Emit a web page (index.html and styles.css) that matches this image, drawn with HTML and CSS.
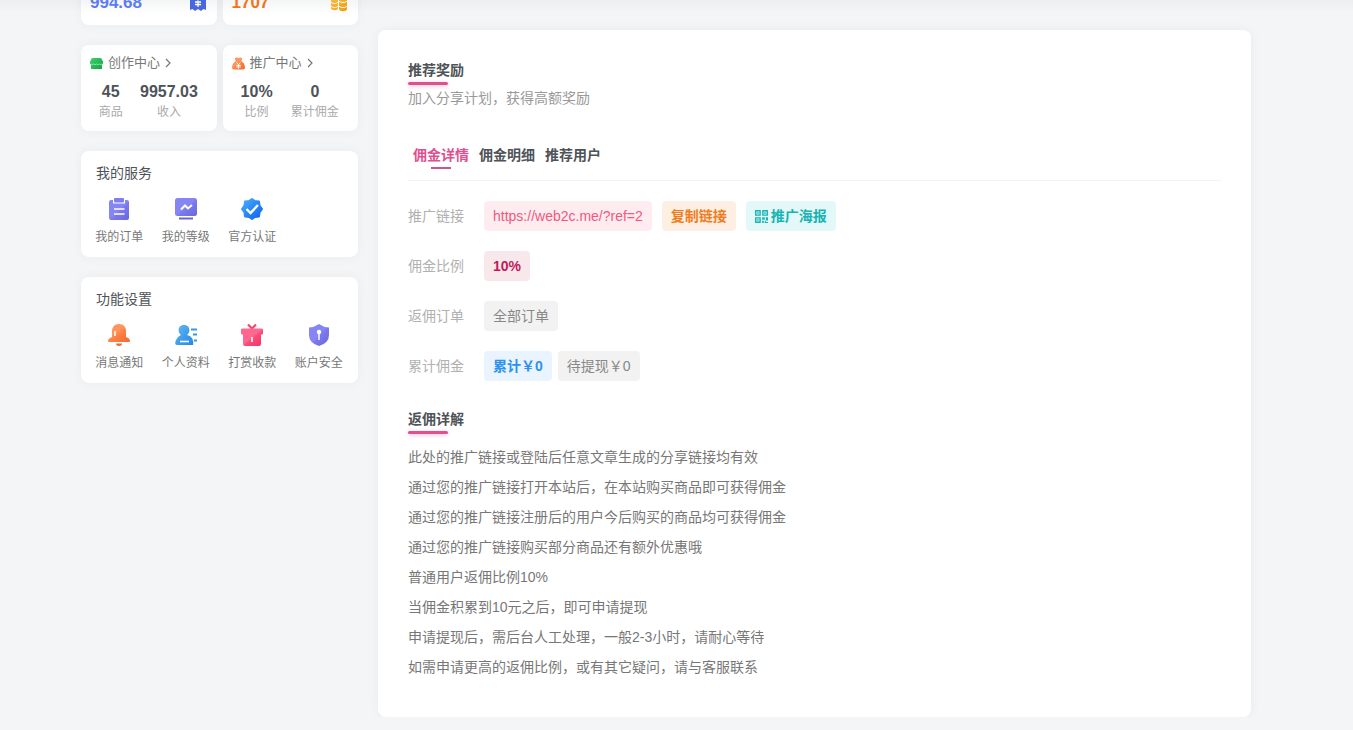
FILE: index.html
```html
<!DOCTYPE html>
<html lang="zh-CN">
<head>
<meta charset="utf-8">
<meta name="viewport" content="width=device-width, initial-scale=1">
<title>推荐奖励</title>
<link rel="stylesheet" href="styles.css">
</head>
<body>
<svg class="defs" aria-hidden="true">
  <defs>
    <linearGradient id="purple" x2="1" y2="1"><stop offset=".5" stop-color="#8585f4"/><stop offset=".55" stop-color="#7a7aee"/><stop offset="1" stop-color="#6866dd"/></linearGradient>
    <linearGradient id="blue" x2="1" y2="1"><stop stop-color="#4aaeff"/><stop offset="1" stop-color="#0b62ec"/></linearGradient>
    <linearGradient id="sky" x2="1" y2="1"><stop stop-color="#62b8f8"/><stop offset="1" stop-color="#2389df"/></linearGradient>
    <linearGradient id="orange" x2="1" y2="1"><stop offset=".4" stop-color="#ff955a"/><stop offset=".55" stop-color="#fd8045"/><stop offset="1" stop-color="#f4682c"/></linearGradient>
    <linearGradient id="pink" x2="1" y2="1"><stop offset=".5" stop-color="#ff6690"/><stop offset=".55" stop-color="#fb4d7b"/><stop offset="1" stop-color="#f2305f"/></linearGradient>
    <linearGradient id="green" x2="1" y2="1"><stop stop-color="#3fcf6c"/><stop offset="1" stop-color="#12a544"/></linearGradient>
    <linearGradient id="gold" x2="1" y2="1"><stop stop-color="#fbc34b"/><stop offset="1" stop-color="#f09a12"/></linearGradient>
  </defs>
</svg>
<div class="container">
  <aside class="sidebar">
    <div class="pair pair-top">
      <a class="card wallet wallet-blue" href="#"><span>994.68</span>
        <svg class="wallet-icon" viewBox="0 0 18 18"><path fill="#4a68dd" d="M1 0h16v16l-2.500-1-2.500 2-3-2-3 2-2.500-2L1 16z"/><path stroke="#fff" stroke-width="1.300" fill="none" d="M6 2l3 4 3-4M9 6v7M6 8h6M6 10.500h6"/></svg></a>
      <a class="card wallet wallet-orange" href="#"><span>1707</span>
        <svg class="wallet-icon" viewBox="0 0 18 18"><g fill="url(#gold)"><path d="M1 5c0-3 7-3 7 0v9c0 3-7 3-7 0zM9 2c0-3 8-3 8 0v13c0 3-8 3-8 0z"/></g><path fill="none" stroke="#fff" stroke-width="1" d="M1 8c1 2 6 2 7 0M1 12c1 2 6 2 7 0M9 7c1 2 7 2 8 0M9 12c1 2 7 2 8 0M8.500 2v14"/></svg></a>
    </div>
    <div class="pair">
      <section class="card mini">
        <a class="mini-head" href="#">
          <svg class="mini-icon" viewBox="0 0 14 14"><path fill="url(#green)" d="M3 1h8q1 0 1.500 1L14 5v2l-1 1v4q0 1-1 1H2q-1 0-1-1V8L0 7V5l1.500-3Q2 1 3 1z"/><path d="M1 7.500q1.500 1.500 3 0 1.500 1.500 3 0 1.500 1.500 3 0 1.500 1.500 3 0" stroke="#b9f2c9" stroke-width=".8" fill="none"/></svg>
          <span>创作中心</span><svg class="arrow" viewBox="0 0 6 10"><path d="M1 1l4 4-4 4"/></svg></a>
        <div class="stats"><div><b>45</b><small>商品</small></div><div><b>9957.03</b><small>收入</small></div></div>
      </section>
      <section class="card mini">
        <a class="mini-head" href="#">
          <svg class="mini-icon" viewBox="0 0 14 14"><path fill="url(#orange)" d="M3 1q2-1 4 0 2-1 4 0L10 4.500Q13.500 6 14 11q0 2.500-2 2.500H2Q0 13.500 0 11 .5 6 4 4.500z"/><path stroke="#fff" fill="none" d="M5 6l2 2.300L9 6M7 8v4.500M4.500 9h5M4.500 10.800h5"/></svg>
          <span>推广中心</span><svg class="arrow" viewBox="0 0 6 10"><path d="M1 1l4 4-4 4"/></svg></a>
        <div class="stats"><div><b>10%</b><small>比例</small></div><div><b>0</b><small>累计佣金</small></div></div>
      </section>
    </div>
    <section class="card panel">
      <h2>我的服务</h2>
      <nav class="links">
        <a href="#"><svg viewBox="0 0 22 22"><path fill="url(#purple)" d="M3 2h2v3.500h12V2h2q2 0 2 2v16q0 2-2 2H3q-2 0-2-2V4q0-2 2-2z"/><rect x="6" width="10" height="4.500" rx="1" fill="#7d7ef0"/><path stroke="#fff" stroke-width="1.600" d="M6 11h10.500M6 16h10.500"/></svg>我的订单</a>
        <a href="#"><svg viewBox="0 0 22 22"><rect width="22" height="18" rx="2.500" fill="url(#purple)"/><path d="M4 19.500h14v2H4z" fill="#6564dc"/><path d="M6 11.500l4-4 3 3 4-3.500" stroke="#fff" stroke-width="2" fill="none"/></svg>我的等级</a>
        <a href="#"><svg viewBox="0 0 22 22"><path fill="url(#blue)" stroke="url(#blue)" stroke-width="2" stroke-linejoin="round" d="M11 1l3 2 4 .5 .5 4L21 11l-2.500 3.500-.5 4-4 .5-3 2-3-2-4-.5-.5-4L1 11l2.500-3.500 .5-4L8 3z"/><path d="M5.500 11l4 4L17 7" stroke="#fff" stroke-width="2.400" fill="none"/></svg>官方认证</a>
      </nav>
    </section>
    <section class="card panel">
      <h2>功能设置</h2>
      <nav class="links">
        <a href="#"><svg viewBox="0 0 22 22"><path fill="url(#orange)" d="M4 8q0-8 7-8t7 8v5q4 1.500 4 4 0 1-1 1H1q-1 0-1-1 0-2.500 4-4z"/><path d="M7 7v5" stroke="#fff" stroke-width="1.500"/><path d="M8 19.500h6q0 2.500-3 2.500t-3-2.500z" fill="#f06b31"/></svg>消息通知</a>
        <a href="#"><svg viewBox="0 0 22 22"><path fill="url(#sky)" d="M9 1c6 0 7 7 3 10 5 1 7 5 6 10H2q-3 0-1-5 2-4 5-5C2 8 3 1 9 1z"/><path d="M16 5.500h6M18 10.500h4M19 16.500h3" stroke="#3997e8" stroke-width="1.800"/><path d="M5 17.500h9" stroke="#fff" stroke-width="1.600"/></svg>个人资料</a>
        <a href="#"><svg viewBox="0 0 22 22"><path d="M7 .5l4 4 4-4" stroke="#ef4770" stroke-width="2.200" fill="none"/><path fill="url(#pink)" d="M1.500 4.500h19q1.500 0 1.500 1v4q0 1-1 1h-1V20q0 2-2 2H4q-2 0-2-2v-9.500H1q-1 0-1-1v-4q0-1 1.500-1z"/><path d="M11 13v5" stroke="#fff" stroke-width="1.600"/></svg>打赏收款</a>
        <a href="#"><svg viewBox="0 0 22 22"><path fill="url(#purple)" d="M11 0q5 3.500 10 3.500V11q0 8-10 11Q1 19 1 11V3.500Q6 3.500 11 0z"/><circle cx="11" cy="8" r="2.200" fill="#fff"/><path d="M11 9v7" stroke="#fff" stroke-width="1.500"/></svg>账户安全</a>
      </nav>
    </section>
  </aside>
  <div class="content">
    <div class="card previous"></div>
    <main class="card main">
      <h1 class="title">推荐奖励</h1>
      <p class="subtitle">加入分享计划，获得高额奖励</p>
      <div class="tabs">
        <button type="button" class="tab active">佣金详情</button>
        <button type="button" class="tab">佣金明细</button>
        <button type="button" class="tab">推荐用户</button>
      </div>
      <div class="rows">
        <div class="row"><span class="label">推广链接</span><div class="chips wide"><a class="chip red" href="#">https://web2c.me/?ref=2</a><button type="button" class="chip orange">复制链接</button><button type="button" class="chip teal"><svg class="qr" viewBox="0 0 12 12"><path d="M.7.700h4v4h-4zM7.300.700h4v4h-4zM.7 7.300h4v4h-4z" fill="none" stroke="currentColor" stroke-width="1.300"/><path fill="currentColor" d="M2 2h1.400v1.400H2zM8.600 2H10v1.400H8.600zM2 8.600h1.400V10H2zM6.600 6.600H9V9H6.600zM10 6.600h2v3h-2zM6.600 10h1.500v2H6.600zM9 10h1v1h2v1H9z"/></svg>推广海报</button></div></div>
        <div class="row"><span class="label">佣金比例</span><div class="chips"><span class="chip rose">10%</span></div></div>
        <div class="row"><span class="label">返佣订单</span><div class="chips"><span class="chip gray">全部订单</span></div></div>
        <div class="row"><span class="label">累计佣金</span><div class="chips"><span class="chip blue">累计￥0</span><span class="chip gray">待提现￥0</span></div></div>
      </div>
      <h2 class="title">返佣详解</h2>
      <div class="details">
        <p>此处的推广链接或登陆后任意文章生成的分享链接均有效</p>
        <p>通过您的推广链接打开本站后，在本站购买商品即可获得佣金</p>
        <p>通过您的推广链接注册后的用户今后购买的商品均可获得佣金</p>
        <p>通过您的推广链接购买部分商品还有额外优惠哦</p>
        <p>普通用户返佣比例10%</p>
        <p>当佣金积累到10元之后，即可申请提现</p>
        <p>申请提现后，需后台人工处理，一般2-3小时，请耐心等待</p>
        <p>如需申请更高的返佣比例，或有其它疑问，请与客服联系</p>
      </div>
    </main>
  </div>
</div>
</body>
</html>
```
FILE: styles.css
```css
* { box-sizing: border-box; }
body {
  margin: 0;
  padding-right: 21px;
  overflow: hidden;
  background: #f4f5f7 linear-gradient(#eceef0, #f4f5f7) 0 0 / 100% 12px no-repeat;
  color: #4e5358;
  font: 14px/20px "Liberation Sans", "Noto Sans CJK SC", sans-serif;
}
h1, h2, p { margin: 0; font-size: 14px; }
a { color: inherit; text-decoration: none; }
button { border: 0; background: none; font: inherit; color: inherit; cursor: pointer; }
.defs { position: absolute; width: 0; height: 0; }

.container {
  display: grid;
  grid-template-columns: 277px 1fr;
  gap: 20px;
  align-items: start;
  max-width: 1170px;
  margin: 0 auto;
}
.card { background: #fff; border-radius: 8px; box-shadow: 0 0 10px rgba(116, 116, 116, .08); }
.sidebar { display: grid; gap: 20px; }
.pair { display: grid; grid-template-columns: 1fr 1fr; gap: 6px; }
.pair-top { margin-top: -40px; }

.wallet {
  display: flex;
  justify-content: space-between;
  align-items: center;
  padding: 33px 10px 12px 9px;
  font-size: 17px;
  font-weight: bold;
  background: linear-gradient(#f4f5f6 40px, #fff 54px);
}
.wallet-blue { color: #5c7cf2; }
.wallet-orange { color: #f0751c; }
.wallet-icon { width: 18px; height: 18px; }

.mini { padding: 8px 10px 8px 9px; }
.mini-head { display: flex; align-items: center; font-size: 13px; color: #777; }
.mini-icon { width: 13px; height: 13px; margin-right: 5px; }
.arrow { width: 6px; height: 10px; margin-left: 5px; fill: none; stroke: #777; stroke-width: 1.200; }
.stats { display: flex; justify-content: space-around; margin-top: 8px; text-align: center; }
.stats b { display: block; font-size: 16px; line-height: 21px; }
.stats small { display: block; font-size: 12px; line-height: 21px; color: #aaa; }

.panel { padding: 12px 6px 10px 5px; }
.panel h2 { padding-left: 10px; font-weight: normal; }
.links { display: grid; grid-template-columns: repeat(4, 1fr); margin-top: 15px; }
.links a { display: grid; justify-items: center; gap: 7px; font-size: 12px; color: #777; }
.links svg { width: 22px; height: 22px; }

.content { display: grid; gap: 30px; }
.previous { height: 0; }
.main { padding: 30px 30px 35px; }
.title { width: max-content; font-weight: bold; }
.title::after { content: ""; display: block; width: 40px; height: 3px; margin-top: 2px; border-radius: 2px; background: #e0508f; box-shadow: 0 1px 4px rgba(224, 80, 143, .4); }
.subtitle { margin-top: 3px; color: #999; }

.tabs { display: flex; margin-top: 37px; padding-bottom: 11px; border-bottom: 1px solid #f2f2f3; }
.tab { padding: 0 5px; font-weight: bold; }
.tab::after { content: ""; display: block; width: 20px; height: 2px; margin: 2px auto 0; }
.tab.active { color: #e0508f; }
.tab.active::after { background: #cf5589; }

.rows { display: grid; gap: 20px; margin: 20px 0 28px; }
.row { display: flex; align-items: center; gap: 20px; }
.label { color: #b1b1b1; }
.chips { display: flex; flex-wrap: wrap; gap: 6px; }
.chips.wide { gap: 10px; }
.chip { display: flex; align-items: center; gap: 3px; padding: 5px 9px; border-radius: 4px; }
.qr { width: 13px; height: 13px; }
.red { color: #f0597c; background: #feecf1; }
.orange { color: #f17c1f; background: #feefe3; font-weight: bold; }
.teal { color: #18b3b3; background: #e3f8f8; font-weight: bold; }
.rose { color: #c2185b; background: #f9e8eb; font-weight: bold; }
.gray { color: #888; background: #f2f2f2; }
.blue { color: #2e91ee; background: #e9f4ff; font-weight: bold; }

.details { margin-top: 8px; line-height: 30px; color: #777; }
```
